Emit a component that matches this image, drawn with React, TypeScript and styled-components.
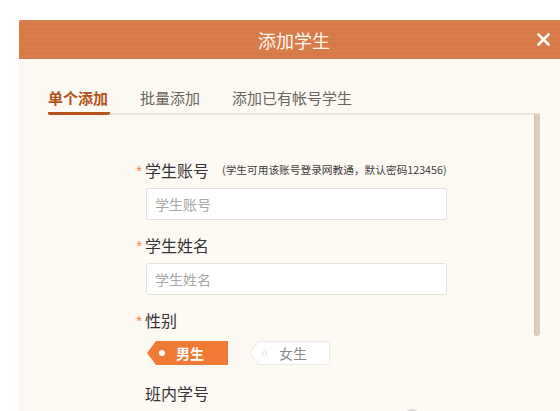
import React from "react";
import styled, { createGlobalStyle } from "styled-components";

const Global = createGlobalStyle`
  html, body {
    margin: 0;
    padding: 0;
    background: #ffffff;
    overflow: hidden;
  }
  body {
    font-family: "Noto Sans CJK SC", "Noto Sans", "Liberation Sans", sans-serif;
  }
`;

const Page = styled.div`
  padding: 20px 0 0 19px;
  width: 560px;
  height: 411px;
  box-sizing: border-box;
  overflow: hidden;
`;

const Dialog = styled.div`
  width: 550px;
  height: 420px;
  background: #fdf9f3;
  display: flex;
  flex-direction: column;
  overflow: hidden;
`;

const Header = styled.div`
  flex: none;
  height: 39px;
  display: grid;
  grid-template-columns: 1fr auto 1fr;
  align-items: center;
  background-color: #d77b48;
  background-image: repeating-linear-gradient(
    180deg,
    rgba(255, 255, 255, 0.015) 0px,
    rgba(255, 255, 255, 0.015) 2px,
    rgba(0, 0, 0, 0.012) 3px,
    rgba(0, 0, 0, 0.012) 5px
  );
  border-top-left-radius: 2px;
`;

const Title = styled.div`
  grid-column: 2;
  color: #fff6ee;
  font-size: 18px;
  line-height: 24px;
`;

const Close = styled.button`
  grid-column: 3;
  justify-self: end;
  margin-right: 19px;
  width: 13px;
  height: 13px;
  padding: 0;
  border: 0;
  background: none;
  display: flex;
  align-items: center;
  justify-content: center;
  cursor: pointer;
`;

const Body = styled.div`
  flex: none;
  padding: 29px 29px 0 29px;
  display: flex;
  flex-direction: column;
`;

const TabBar = styled.div`
  display: flex;
  gap: 30px;
  border-bottom: 2px solid #ece5dc;
`;

const Tab = styled.div<{ $active?: boolean }>`
  font-size: 15px;
  line-height: 20px;
  padding: 0 2px 4px 0;
  margin-bottom: -2px;
  color: ${(p) => (p.$active ? "#b4531b" : "#6a6560")};
  font-weight: ${(p) => (p.$active ? 700 : 400)};
  border-bottom: 3px solid ${(p) => (p.$active ? "#b9551c" : "transparent")};
  border-radius: 0 0 2px 2px;
`;

const ContentRow = styled.div`
  display: flex;
`;

const Form = styled.div`
  flex: 1;
  padding: 44px 0 0 85px;
  display: flex;
  flex-direction: column;
  gap: 14px;
`;

const Field = styled.div<{ $padBottom?: number }>`
  display: flex;
  flex-direction: column;
  padding-bottom: ${(p) => p.$padBottom ?? 0}px;
`;

const LabelRow = styled.div`
  display: flex;
  align-items: center;
  height: 22px;
  margin-bottom: 7px;
`;

const Star = styled.span`
  width: 12px;
  align-self: flex-start;
  text-align: right;
  padding: 4px 3px 0 0;
  box-sizing: border-box;
  color: #f08448;
  font-family: "Liberation Sans", sans-serif;
  font-size: 15px;
  line-height: 16px;
`;

const Label = styled.span`
  font-size: 16px;
  line-height: 22px;
  color: #333333;
`;

const Hint = styled.span`
  margin-left: 13px;
  font-size: 10.7px;
  line-height: 16px;
  color: #3e3e3e;
`;

const InputWrap = styled.div`
  position: relative;
  margin-left: 13px;
  width: 301px;
`;

const Input = styled.input`
  box-sizing: border-box;
  width: 100%;
  height: 32px;
  border: 1px solid #e6e0d8;
  border-radius: 3px;
  background: #ffffff;
  padding: 0 8px;
  font-family: "Noto Sans CJK SC", "Noto Sans", sans-serif;
  font-size: 14px;
  color: #333;
  outline: none;
  &::placeholder {
    color: #a8a8a8;
  }
`;

const HelpDot = styled.span`
  position: absolute;
  left: 259px;
  top: -2px;
  width: 14px;
  height: 14px;
  border-radius: 50%;
  background: #d8d6d3;
`;

const TagRow = styled.div`
  display: flex;
  gap: 21px;
  margin: 3px 0 0 14px;
`;

const TagOuter = styled.div<{ $checked?: boolean }>`
  width: 81px;
  height: 24px;
  padding: 1px;
  box-sizing: border-box;
  background: ${(p) => (p.$checked ? "#ee7a33" : "#efebe6")};
  clip-path: polygon(9px 0, 100% 0, 100% 100%, 9px 100%, 0 50%);
  cursor: pointer;
`;

const TagInner = styled.div<{ $checked?: boolean }>`
  height: 100%;
  display: flex;
  align-items: center;
  background: ${(p) => (p.$checked ? "#ee7a33" : "#ffffff")};
  clip-path: polygon(8.5px 0, 100% 0, 100% 100%, 8.5px 100%, 0 50%);
  color: ${(p) => (p.$checked ? "#ffffff" : "#8a8a8a")};
  font-size: 14px;
  line-height: 20px;
  font-weight: ${(p) => (p.$checked ? 700 : 400)};
`;

const Dot = styled.span<{ $checked?: boolean }>`
  width: ${(p) => (p.$checked ? 6 : 5)}px;
  height: ${(p) => (p.$checked ? 6 : 5)}px;
  box-sizing: border-box;
  border-radius: 50%;
  margin: 0 ${(p) => (p.$checked ? 11 : 12)}px 0 ${(p) => (p.$checked ? 11 : 12)}px;
  background: ${(p) => (p.$checked ? "#ffffff" : "transparent")};
  border: ${(p) => (p.$checked ? "none" : "1px solid #e2e0dd")};
`;

const ScrollTrack = styled.div`
  width: 6px;
  flex: none;
  margin-left: auto;
  margin-top: -1px;
`;

const ScrollThumb = styled.div`
  width: 6px;
  height: 222px;
  border-radius: 0 0 3px 3px;
  background: #ddcdba;
  border-left: 1px solid #d3c1ab;
  box-sizing: border-box;
`;

function CloseIcon() {
  return (
    <svg width="13" height="13" viewBox="0 0 13 13">
      <path
        d="M1.5 1.5 L11.5 11.5 M11.5 1.5 L1.5 11.5"
        stroke="#ffffff"
        strokeWidth="2.6"
        strokeLinecap="round"
      />
    </svg>
  );
}

export default function App() {
  return (
    <>
      <Global />
      <Page>
        <Dialog>
          <Header>
            <Title>添加学生</Title>
            <Close aria-label="关闭">
              <CloseIcon />
            </Close>
          </Header>
          <Body>
            <TabBar>
              <Tab $active>单个添加</Tab>
              <Tab>批量添加</Tab>
              <Tab>添加已有帐号学生</Tab>
            </TabBar>
            <ContentRow>
              <Form>
                <Field>
                  <LabelRow>
                    <Star>*</Star>
                    <Label>学生账号</Label>
                    <Hint>(学生可用该账号登录网教通，默认密码123456)</Hint>
                  </LabelRow>
                  <InputWrap>
                    <Input placeholder="学生账号" />
                  </InputWrap>
                </Field>
                <Field>
                  <LabelRow>
                    <Star>*</Star>
                    <Label>学生姓名</Label>
                  </LabelRow>
                  <InputWrap>
                    <Input placeholder="学生姓名" />
                  </InputWrap>
                </Field>
                <Field $padBottom={3}>
                  <LabelRow>
                    <Star>*</Star>
                    <Label>性别</Label>
                  </LabelRow>
                  <TagRow>
                    <TagOuter $checked>
                      <TagInner $checked>
                        <Dot $checked />
                        男生
                      </TagInner>
                    </TagOuter>
                    <TagOuter>
                      <TagInner>
                        <Dot />
                        女生
                      </TagInner>
                    </TagOuter>
                  </TagRow>
                </Field>
                <Field>
                  <LabelRow>
                    <Star />
                    <Label>班内学号</Label>
                  </LabelRow>
                  <InputWrap>
                    <Input />
                    <HelpDot />
                  </InputWrap>
                </Field>
              </Form>
              <ScrollTrack>
                <ScrollThumb />
              </ScrollTrack>
            </ContentRow>
          </Body>
        </Dialog>
      </Page>
    </>
  );
}
